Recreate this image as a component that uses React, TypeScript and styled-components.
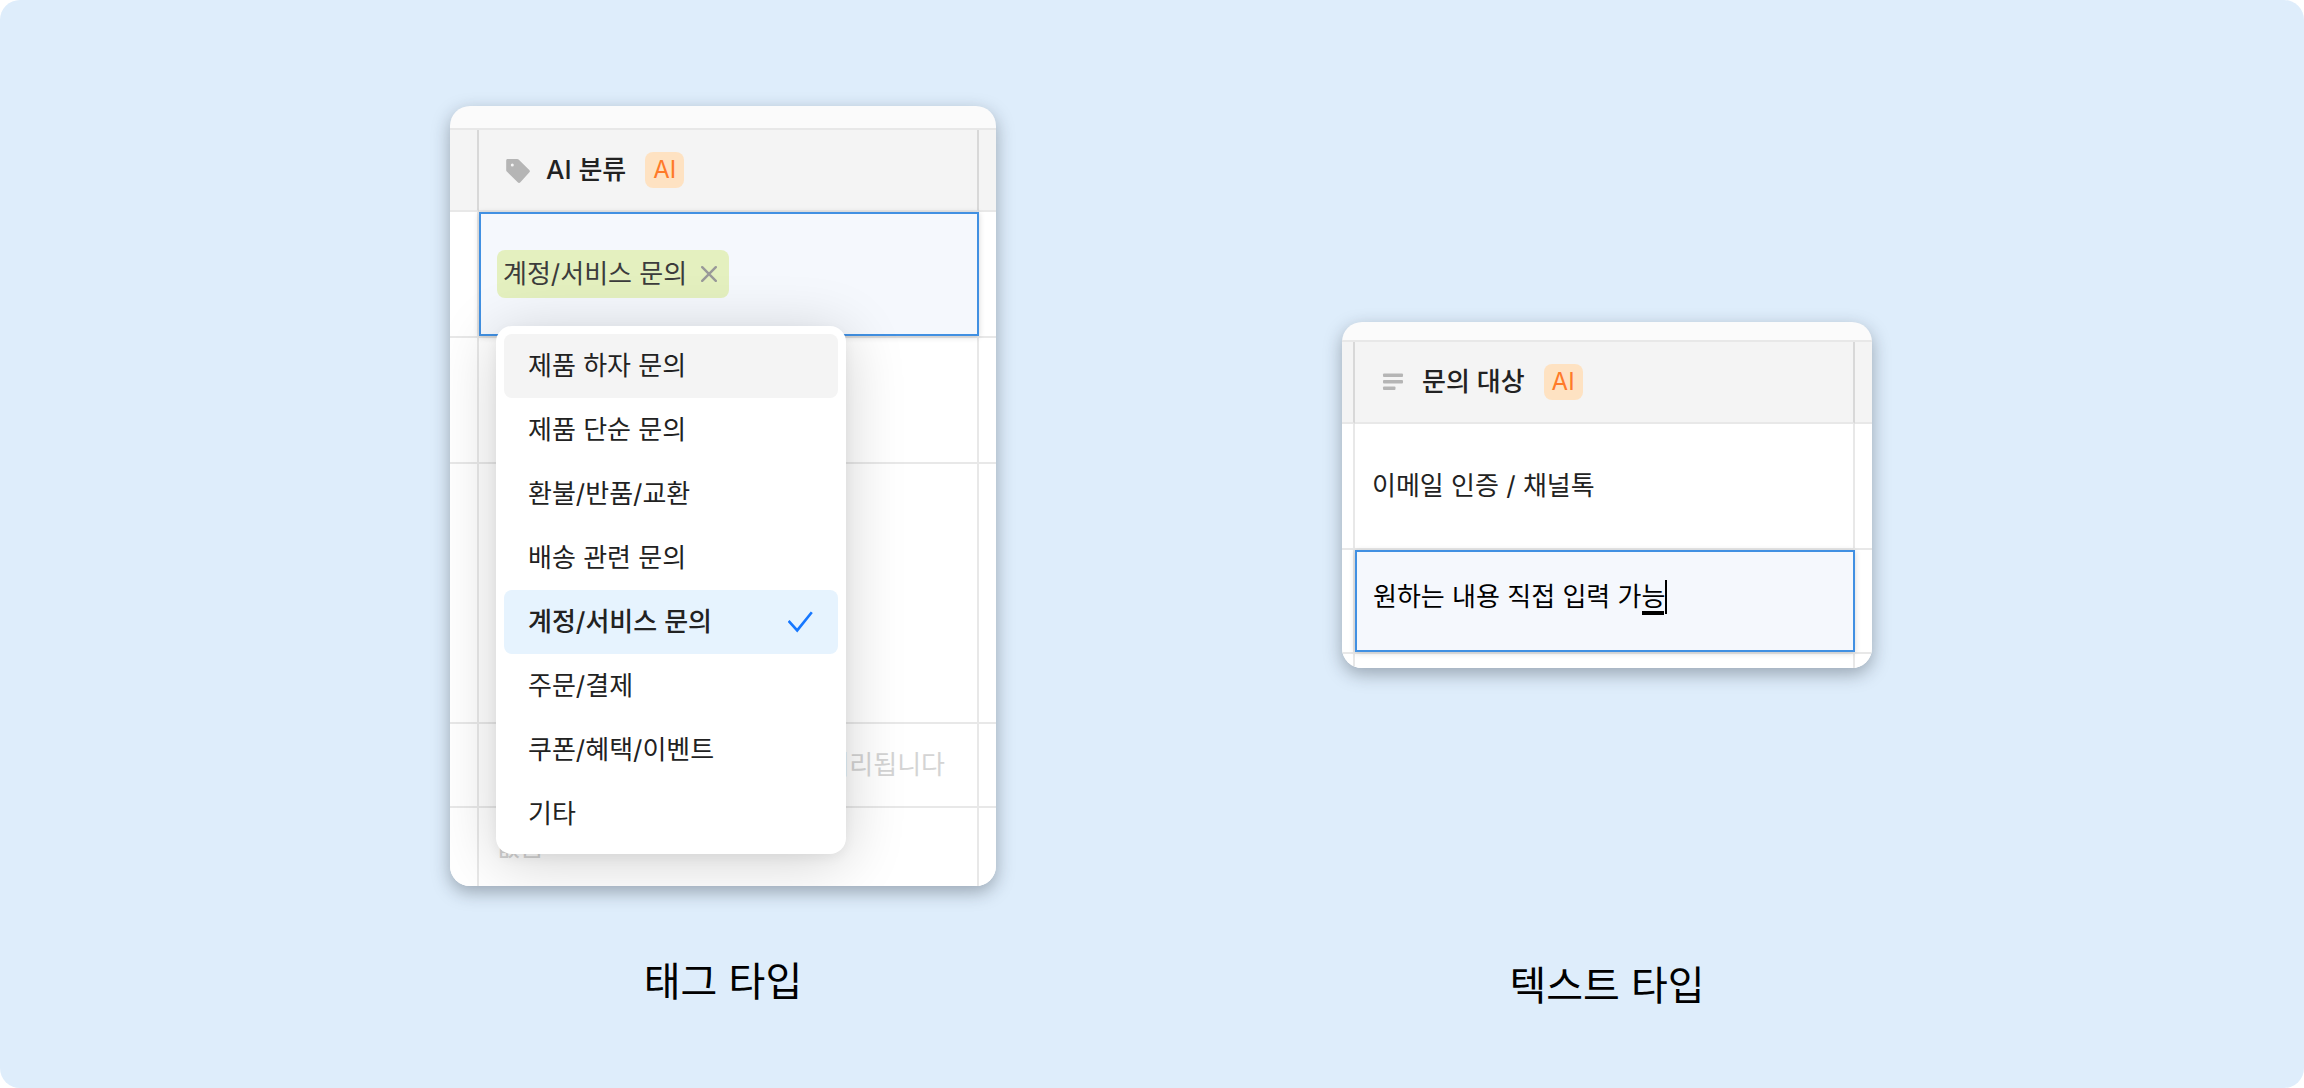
import React, { useState } from "react";
import styled, { createGlobalStyle, css } from "styled-components";

const GlobalStyle = createGlobalStyle`
  *, *::before, *::after { box-sizing: border-box; }
  body {
    margin: 0;
    background: #ffffff;
    color: #222222;
    font-family: Inter, "Noto Sans CJK KR", sans-serif;
    font-size: 26px;
    line-height: 36px;
  }
  button, input { font: inherit; color: inherit; }
`;

const Page = styled.main`
  min-height: 100vh;
  padding: 106px 255px 68px 281px;
  display: grid;
  grid-template-columns: repeat(2, minmax(0, 1fr));
  background: #deedfb;
  border-radius: 20px;
`;

const Figure = styled.figure<{ $gap: number }>`
  margin: 0;
  display: flex;
  flex-direction: column;
  align-items: center;
  gap: ${(p) => p.$gap}px;
`;

const Stage = styled.div`
  width: 100%;
  min-height: 778px;
  display: flex;
  align-items: center;
  justify-content: center;
`;

const Caption = styled.figcaption`
  font-size: 40px;
  line-height: 52px;
  color: #000000;
`;

const Card = styled.section<{ $width: number; $top: number }>`
  width: 100%;
  max-width: ${(p) => p.$width}px;
  padding-top: ${(p) => p.$top}px;
  overflow: hidden;
  border-radius: 20px;
  background: #fbfbfb;
  box-shadow: 0 6px 18px rgba(30, 40, 50, 0.36);
`;

const Grid = styled.table`
  width: 100%;
  table-layout: fixed;
  border-spacing: 0;
  border-top: 2px solid #e8e8e8;
  background: #ffffff;
`;

const EdgeCol = styled.col<{ $width: number }>`
  width: ${(p) => p.$width}px;
`;

const Row = styled.tr<{ $height: number }>`
  height: ${(p) => p.$height}px;
`;

const cell = css`
  padding: 0;
  border-bottom: 2px solid #e8e8e8;
  border-right: 2px solid #e8e8e8;
  &:last-child { border-right: 0; }
`;

const HeadCell = styled.th`
  ${cell}
  background: #f4f4f4;
  border-right-color: #d8d8d8;
  text-align: left;
  font-weight: 500;
`;

const Cell = styled.td<{ $selected?: boolean; $last?: boolean }>`
  ${cell}
  ${(p) => p.$selected && "border-right: 0;"}
  ${(p) => p.$last && "border-bottom: 0;"}
`;

const Heading = styled.div`
  display: flex;
  align-items: center;
  padding-left: 25px;
`;

const HeadingText = styled.span`
  margin: 0 19px 0 14px;
`;

const AiBadge = styled.span`
  width: 39px;
  height: 36px;
  border-radius: 8px;
  background: #fee2c2;
  color: #ff7a29;
  font-size: 24px;
  font-weight: 400;
  text-align: center;
`;

const CellText = styled.div<{ $muted?: boolean; $end?: boolean }>`
  padding: 0 32px 0 17px;
  text-align: ${(p) => (p.$end ? "right" : "left")};
  color: ${(p) => (p.$muted ? "#d4d4d4" : "#222222")};
  white-space: nowrap;
`;

const Selection = styled.div<{ $height: number }>`
  position: relative;
  height: ${(p) => p.$height}px;
  padding: 0 16px;
  display: flex;
  align-items: center;
  border: 2px solid #4190e2;
  background: #f5f8fd;
  box-shadow: 0 1px 6px rgba(0, 0, 0, 0.16);
`;

const Tag = styled.span`
  height: 48px;
  padding: 0 6px;
  display: flex;
  align-items: center;
  gap: 8px;
  border-radius: 8px;
  background: #e4f0bf;
  color: #3c3c3c;
`;

const TagRemove = styled.button`
  width: 28px;
  height: 28px;
  padding: 6px;
  display: flex;
  border: 0;
  background: none;
  color: #999999;
  cursor: pointer;
`;

const Menu = styled.ul`
  position: absolute;
  z-index: 1;
  top: 112px;
  left: 15px;
  width: 350px;
  margin: 0;
  padding: 8px;
  list-style: none;
  border-radius: 16px;
  background: #ffffff;
  box-shadow: 0 8px 60px rgba(0, 0, 0, 0.18), 0 4px 12px rgba(0, 0, 0, 0.05);
`;

const Option = styled.button<{ $hover?: boolean; $checked?: boolean }>`
  width: 100%;
  height: 64px;
  padding: 0 24px;
  display: flex;
  align-items: center;
  justify-content: space-between;
  border: 0;
  border-radius: 8px;
  background: ${(p) => (p.$checked ? "#e6f3fe" : p.$hover ? "#f4f4f4" : "transparent")};
  font-weight: ${(p) => (p.$checked ? 500 : 400)};
  text-align: left;
  cursor: pointer;
`;

const Editor = styled.span`
  position: relative;
  display: flex;
  align-items: center;
  margin-bottom: 8px;
  &::before {
    content: "";
    position: absolute;
    right: 3px;
    bottom: 0;
    width: 22px;
    height: 4px;
    background: #000000;
  }
  &::after {
    content: "";
    width: 2px;
    height: 34px;
    background: #000000;
  }
`;

const TextInput = styled.input`
  field-sizing: content;
  height: 36px;
  padding: 0;
  border: 0;
  outline: 0;
  background: none;
  color: #000000;
`;

const TagIcon = () => (
  <svg width="28" height="28" viewBox="0 0 28 28" aria-hidden="true">
    <path
      fill="#b5b5b5"
      fillRule="evenodd"
      d="M3.6 3h9.6c.6 0 1 .2 1.4.6l10.7 10.3c.8.8.8 1.7.1 2.400l-9 9.900c-.7.9-1.9.9-2.7.1L2.800 15.600c-.4-.4-.6-.9-.6-1.400V4.400C2.200 3.600 2.800 3 3.600 3ZM8.300 7.400a1.500 1.500 0 1 0 0 3 1.500 1.500 0 0 0 0-3Z"
    />
  </svg>
);

const TextIcon = () => (
  <svg width="28" height="28" viewBox="0 0 28 28" fill="#b5b5b5" aria-hidden="true">
    <rect x="3" y="5.5" width="20" height="3.6" rx="1" />
    <rect x="3" y="12" width="20" height="3.6" rx="1" />
    <rect x="3" y="18.5" width="12.500" height="3.6" rx="1" />
  </svg>
);

const CloseIcon = () => (
  <svg width="16" height="16" viewBox="0 0 16 16" fill="none" stroke="currentColor" strokeWidth="2.4" aria-hidden="true">
    <path strokeLinecap="round" d="M1.200 1.200l13.600 13.600M14.800 1.200L1.200 14.800" />
  </svg>
);

const CheckIcon = () => (
  <svg width="26" height="22" viewBox="0 0 26 22" fill="none" stroke="#1677ff" strokeWidth="2.600" aria-hidden="true">
    <path d="M0.600 10l8.600 9.400L23.800 1.200" />
  </svg>
);

const options = [
  "제품 하자 문의",
  "제품 단순 문의",
  "환불/반품/교환",
  "배송 관련 문의",
  "계정/서비스 문의",
  "주문/결제",
  "쿠폰/혜택/이벤트",
  "기타",
];

function ColumnHeading({ icon, title }: { icon: React.ReactNode; title: string }) {
  return (
    <Row $height={82}>
      <HeadCell />
      <HeadCell scope="col">
        <Heading>
          {icon}
          <HeadingText>{title}</HeadingText>
          <AiBadge>AI</AiBadge>
        </Heading>
      </HeadCell>
      <HeadCell />
    </Row>
  );
}

function TagCard() {
  const [value, setValue] = useState(options[4]);
  return (
    <Card $width={546} $top={22}>
      <Grid>
        <colgroup>
          <EdgeCol $width={29} />
          <col />
          <EdgeCol $width={17} />
        </colgroup>
        <thead>
          <ColumnHeading icon={<TagIcon />} title="AI 분류" />
        </thead>
        <tbody>
          <Row $height={126}>
            <Cell />
            <Cell $selected>
              <Selection $height={124}>
                {value && (
                  <Tag>
                    {value}
                    <TagRemove type="button" aria-label="삭제" onClick={() => setValue("")}>
                      <CloseIcon />
                    </TagRemove>
                  </Tag>
                )}
                <Menu>
                  {options.map((option, index) => (
                    <li key={option}>
                      <Option
                        type="button"
                        $hover={index === 0}
                        $checked={option === value}
                        onClick={() => setValue(option)}
                      >
                        {option}
                        {option === value && <CheckIcon />}
                      </Option>
                    </li>
                  ))}
                </Menu>
              </Selection>
            </Cell>
            <Cell />
          </Row>
          <Row $height={126}>
            <Cell />
            <Cell />
            <Cell />
          </Row>
          <Row $height={260}>
            <Cell />
            <Cell />
            <Cell />
          </Row>
          <Row $height={84}>
            <Cell />
            <Cell>
              <CellText $muted $end>
                처리됩니다
              </CellText>
            </Cell>
            <Cell />
          </Row>
          <Row $height={78}>
            <Cell $last />
            <Cell $last>
              <CellText $muted>없음</CellText>
            </Cell>
            <Cell $last />
          </Row>
        </tbody>
      </Grid>
    </Card>
  );
}

function TextCard() {
  const [value, setValue] = useState("원하는 내용 직접 입력 가능");
  return (
    <Card $width={530} $top={18}>
      <Grid>
        <colgroup>
          <EdgeCol $width={13} />
          <col />
          <EdgeCol $width={17} />
        </colgroup>
        <thead>
          <ColumnHeading icon={<TextIcon />} title="문의 대상" />
        </thead>
        <tbody>
          <Row $height={126}>
            <Cell />
            <Cell>
              <CellText>이메일 인증 / 채널톡</CellText>
            </Cell>
            <Cell />
          </Row>
          <Row $height={104}>
            <Cell />
            <Cell $selected>
              <Selection $height={102}>
                <Editor>
                  <TextInput
                    aria-label="문의 대상"
                    value={value}
                    onChange={(event) => setValue(event.target.value)}
                  />
                </Editor>
              </Selection>
            </Cell>
            <Cell />
          </Row>
          <Row $height={14}>
            <Cell $last />
            <Cell $last />
            <Cell $last />
          </Row>
        </tbody>
      </Grid>
    </Card>
  );
}

export default function App() {
  return (
    <>
      <GlobalStyle />
      <Page>
        <Figure $gap={70}>
          <Stage>
            <TagCard />
          </Stage>
          <Caption>태그 타입</Caption>
        </Figure>
        <Figure $gap={76}>
          <Stage>
            <TextCard />
          </Stage>
          <Caption>텍스트 타입</Caption>
        </Figure>
      </Page>
    </>
  );
}
